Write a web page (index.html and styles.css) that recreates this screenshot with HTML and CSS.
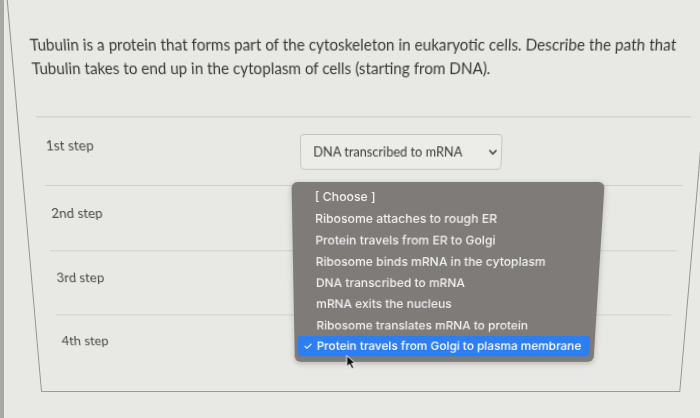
FILE: index.html
```html
<!DOCTYPE html>
<html lang="en">
<head>
<meta charset="utf-8">
<title>Quiz question</title>
<link rel="stylesheet" href="styles.css">
</head>
<body>
<div class="frame">
  <div class="stage">
    <div class="card">
      <div class="question">
        <p>Tubulin is a protein that forms part of the cytoskeleton in eukaryotic cells. Describe the path that<br>Tubulin takes to end up in the cytoplasm of cells (starting from DNA).</p>
      </div>
      <div class="answers">
        <div class="row">
          <span class="label">1st step</span>
          <div class="select">
            <span>DNA transcribed to mRNA</span>
            <svg class="chev" width="8" height="6" viewBox="0 0 8 6"><path d="M1 1.2 L4 4.4 L7 1.2" fill="none" stroke="#4a4a4a" stroke-width="1.6" stroke-linecap="round" stroke-linejoin="round"/></svg>
          </div>
        </div>
        <div class="row"><span class="label">2nd step</span></div>
        <div class="row"><span class="label">3rd step</span></div>
        <div class="row"><span class="label">4th step</span></div>
      </div>
      <div class="menu">
        <div class="item">[ Choose ]</div>
        <div class="item">Ribosome attaches to rough ER</div>
        <div class="item">Protein travels from ER to Golgi</div>
        <div class="item">Ribosome binds mRNA in the cytoplasm</div>
        <div class="item">DNA transcribed to mRNA</div>
        <div class="item">mRNA exits the nucleus</div>
        <div class="item">Ribosome translates mRNA to protein</div>
        <div class="item selected"><span class="check">✓</span><span>Protein travels from Golgi to plasma membrane</span></div>
      </div>
      <svg class="cursor" width="12" height="17" viewBox="0 0 12 17"><path d="M1 1 L1 13.5 L4 10.6 L6.4 15.6 L8.6 14.6 L6.3 9.7 L10.3 9.7 Z" fill="#111" stroke="#fff" stroke-width="1" stroke-linejoin="round"/></svg>
    </div>
  </div>
</div>
</body>
</html>
```
FILE: styles.css
```css
html, body {
  margin: 0;
  padding: 0;
}
body {
  background: #e8e8e4;
  overflow: hidden;
  font-family: Lato, "Noto Sans", sans-serif;
}
.frame {
  width: 700px;
  height: 418px;
  overflow: hidden;
  background: #e8e8e4;
  box-shadow: inset 4px 0 0 #a7a7a3;
}
.stage {
  width: 700px;
  height: 418px;
  padding-left: 25px;
  box-sizing: border-box;
  transform-origin: 363px 209px;
  transform: perspective(400px) rotateX(-5.92deg);
}
.card {
  position: relative;
  width: 671px;
  height: 402px;
  box-sizing: border-box;
  border: 1px solid #94948f;
  border-top: none;
}
.question {
  margin: 0 12px 0 17.5px;
  padding-top: 39px;
  height: 119px;
  box-sizing: border-box;
  border-bottom: 1px solid #cbcbc7;
}
.question p {
  margin: 0;
  font-size: 14.7px;
  line-height: 22px;
  color: #383838;
}
.answers {
  margin: 0 15px 0 20.5px;
}
.row {
  display: flex;
  align-items: flex-start;
  height: 66.7px;
  box-sizing: border-box;
  padding-left: 4.5px;
  border-bottom: 1px solid #cfcfcb;
}
.row:last-child {
  border-bottom: none;
}
.label {
  width: 250px;
  padding-top: 18px;
  font-size: 13.4px;
  line-height: 18px;
  color: #4a4a4a;
}
.select {
  margin-top: 16.4px;
  width: 199px;
  height: 35px;
  box-sizing: border-box;
  display: flex;
  align-items: center;
  justify-content: space-between;
  padding: 0 4px 0 12px;
  border: 1px solid #c5c5c1;
  border-radius: 4px;
  background: #ececE9;
  font-size: 12.6px;
  color: #3a3a3a;
}
.chev {
  display: block;
}
.menu {
  position: absolute;
  left: 266px;
  top: 182px;
  width: 311px;
  padding: 4px 0 6px;
  box-sizing: border-box;
  background: #7e7b79;
  border-radius: 6px;
  box-shadow: 0 2px 6px rgba(0, 0, 0, 0.22);
  font-family: Inter, "Noto Sans", sans-serif;
  font-size: 12.25px;
  font-weight: 500;
  color: #f2f2f2;
}
.item {
  height: 22.1px;
  line-height: 22px;
  padding-left: 23px;
  white-space: nowrap;
}
.item.selected {
  display: flex;
  margin: 0 5px 0 3px;
  padding-left: 6px;
  background: #2d7ef1;
  border-radius: 4px;
  color: #fff;
}
.check {
  width: 14px;
  font-size: 11px;
}
.cursor {
  position: absolute;
  left: 319px;
  top: 361px;
}
```
